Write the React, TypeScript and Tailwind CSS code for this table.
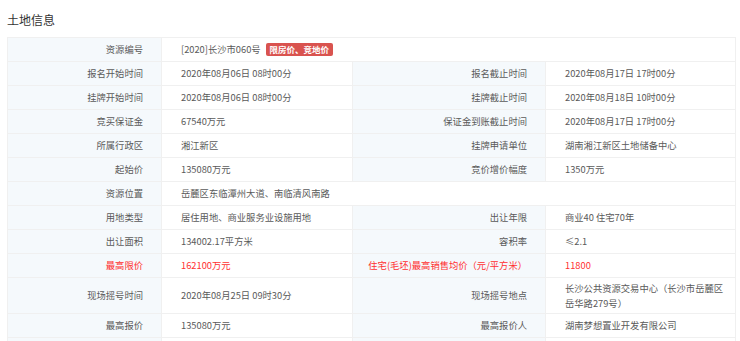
import type { ReactNode } from 'react';

type Row = {
  label: ReactNode;
  value: ReactNode;
  label2?: ReactNode;
  value2?: ReactNode;
  red?: boolean;
  tall?: boolean;
};

const rows: Row[] = [
  {
    label: '资源编号',
    value: (
      <span className="flex items-center">
        [2020]长沙市060号
        <span className="ml-[5px] rounded-[2px] bg-[#d9534f] px-[4px] text-[8.5px] font-bold leading-[13px] text-white">
          限房价、竞地价
        </span>
      </span>
    ),
  },
  { label: '报名开始时间', value: '2020年08月06日 08时00分', label2: '报名截止时间', value2: '2020年08月17日 17时00分' },
  { label: '挂牌开始时间', value: '2020年08月06日 08时00分', label2: '挂牌截止时间', value2: '2020年08月18日 10时00分' },
  { label: '竞买保证金', value: '67540万元', label2: '保证金到账截止时间', value2: '2020年08月17日 17时00分' },
  { label: '所属行政区', value: '湘江新区', label2: '挂牌申请单位', value2: '湖南湘江新区土地储备中心' },
  { label: '起始价', value: '135080万元', label2: '竞价增价幅度', value2: '1350万元' },
  { label: '资源位置', value: '岳麓区东临潭州大道、南临清风南路' },
  { label: '用地类型', value: '居住用地、商业服务业设施用地', label2: '出让年限', value2: '商业40 住宅70年' },
  { label: '出让面积', value: '134002.17平方米', label2: '容积率', value2: '≤2.1' },
  { label: '最高限价', value: '162100万元', label2: '住宅(毛坯)最高销售均价（元/平方米）', value2: '11800', red: true },
  {
    label: '现场摇号时间',
    value: '2020年08月25日 09时30分',
    label2: '现场摇号地点',
    value2: '长沙公共资源交易中心（长沙市岳麓区岳华路279号）',
    tall: true,
  },
  { label: '最高报价', value: '135080万元', label2: '最高报价人', value2: '湖南梦想置业开发有限公司' },
  { label: '', value: '', label2: '', value2: '' },
];

export default function App() {
  return (
    <div
      className="min-h-[341px] bg-white px-[7px] text-[9.3px] text-[#555]"
      style={{ fontFamily: '"Noto Sans CJK SC", "Noto Sans", sans-serif' }}
    >
      {/* Title */}
      <h2 className="pt-[12px] pb-[9px] text-[12px] leading-[16px] text-[#333]">土地信息</h2>

      {/* Info table */}
      <table className="w-[728px] table-fixed border-collapse border border-[#f0f0f0]">
        <colgroup>
          <col className="w-[154px]" />
          <col className="w-[191px]" />
          <col className="w-[193px]" />
          <col className="w-[190px]" />
        </colgroup>
        <tbody>
          {rows.map((row, i) => {
            const labelCls = `border border-[#f0f0f0] bg-[#f5f9fc] pr-[18px] text-right leading-[15px] ${
              row.red ? 'text-[#ff3030]' : 'text-[#5a5a5a]'
            }`;
            const valueCls = `border border-[#f0f0f0] bg-white pl-[19px] pr-[8px] text-left leading-[15px] ${
              row.red ? 'text-[#ff3030]' : 'text-[#5a5a5a]'
            }`;
            const h = row.tall ? 'h-[36px]' : 'h-[24px]';
            return (
              <tr key={i} className={h}>
                <td className={labelCls}>{row.label}</td>
                {row.label2 === undefined ? (
                  <td className={valueCls} colSpan={3}>
                    {row.value}
                  </td>
                ) : (
                  <>
                    <td className={valueCls}>{row.value}</td>
                    <td className={labelCls}>{row.label2}</td>
                    <td className={`${valueCls} pl-[18px]`}>{row.value2}</td>
                  </>
                )}
              </tr>
            );
          })}
        </tbody>
      </table>
    </div>
  );
}
